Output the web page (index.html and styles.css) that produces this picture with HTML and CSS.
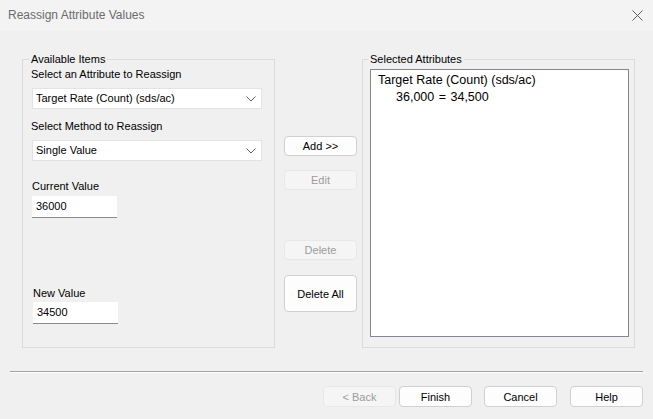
FILE: index.html
```html
<!DOCTYPE html>
<html lang="en">
<head>
    <meta charset="UTF-8">
    <title>Reassign Attribute Values</title>
    <link rel="stylesheet" href="styles.css">
</head>
<body>
    <div class="dialog">
        <div class="titlebar">
            <span class="title">Reassign Attribute Values</span>
            <svg class="close" width="11" height="11" viewBox="0 0 11 11">
                <path d="M0.5 0.5 L10.5 10.5 M10.5 0.5 L0.5 10.5" stroke="#5f5f5f" stroke-width="1" fill="none"/>
            </svg>
        </div>

        <div class="content">
            <fieldset class="group group-left">
                <legend>Available Items</legend>
                <div class="label label-first">Select an Attribute to Reassign</div>
                <div class="combo">
                    <span>Target Rate (Count) (sds/ac)</span>
                    <svg width="10" height="6" viewBox="0 0 10 6">
                        <polyline points="0.5,0.5 5,5 9.5,0.5" stroke="#606060" fill="none"/>
                    </svg>
                </div>
                <div class="label label-method">Select Method to Reassign</div>
                <div class="combo">
                    <span>Single Value</span>
                    <svg width="10" height="6" viewBox="0 0 10 6">
                        <polyline points="0.5,0.5 5,5 9.5,0.5" stroke="#606060" fill="none"/>
                    </svg>
                </div>
                <div class="label label-current">Current Value</div>
                <div class="textbox">36000</div>
                <div class="label label-new">New Value</div>
                <div class="textbox textbox-new">34500</div>
            </fieldset>

            <div class="actions">
                <button class="btn btn-add">Add &gt;&gt;</button>
                <button class="btn btn-edit" disabled>Edit</button>
                <button class="btn btn-delete" disabled>Delete</button>
                <button class="btn btn-delete-all">Delete All</button>
            </div>

            <fieldset class="group group-right">
                <legend>Selected Attributes</legend>
                <div class="listbox">
                    <div class="list-item">Target Rate (Count) (sds/ac)</div>
                    <div class="list-item list-sub">36,000 = 34,500</div>
                </div>
            </fieldset>
        </div>

        <div class="separator"></div>

        <div class="footer">
            <button class="btn btn-back" disabled>&lt; Back</button>
            <button class="btn btn-finish">Finish</button>
            <button class="btn btn-cancel">Cancel</button>
            <button class="btn btn-help">Help</button>
        </div>
    </div>
</body>
</html>
```

FILE: styles.css
```css
* {
    margin: 0;
    padding: 0;
    box-sizing: border-box;
}

body {
    font-family: "Liberation Sans", Arial, sans-serif;
    font-size: 11px;
    line-height: 15px;
    color: #000;
    background: #f0f0f0;
    width: 653px;
    height: 419px;
    overflow: hidden;
}

.dialog {
    width: 653px;
    height: 419px;
}

/* window caption */
.titlebar {
    height: 31px;
    background: #f3f3f3;
    display: flex;
    align-items: center;
    justify-content: space-between;
    padding: 0 10px 0 8px;
}

.title {
    color: #6b6b6b;
    font-size: 12px;
}

.close {
    display: block;
    margin-top: -1px;
}

/* three columns: source group, action buttons, selected group */
.content {
    display: flex;
    align-items: flex-start;
    padding: 21px 0 0 22px;
}

.group {
    border: 1px solid #dcdcdc;
    height: 296px;
    min-width: 0;
}

.group legend {
    padding: 0 2px;
    margin-left: -2px;
    line-height: 15px;
}

.group-left {
    width: 253px;
    padding: 0 12px 0 8px;
}

.group-right {
    width: 273px;
    margin-left: 5px;
    padding: 0 5px 0 7px;
}

.label-method {
    margin-top: 10px;
}

.label-current {
    margin-top: 18px;
    margin-left: 1px;
}

.label-new {
    margin-top: 68px;
    margin-left: 2px;
}

.combo {
    margin-top: 6px;
    margin-left: 1px;
    height: 21px;
    background: #fff;
    border: 1px solid #e3e3e3;
    display: flex;
    align-items: center;
    justify-content: space-between;
    padding: 0 5px 0 3px;
}

.combo svg {
    display: block;
}

.textbox {
    margin-top: 2px;
    margin-left: 1px;
    width: 85px;
    height: 22px;
    background: #fff;
    border-bottom: 1px solid #8a8a8a;
    padding: 3px 0 0 4px;
}

.textbox-new {
    margin-top: 1px;
    margin-left: 2px;
}

.actions {
    width: 73px;
    margin-left: 9px;
    padding-top: 84px;
    display: flex;
    flex-direction: column;
}

.btn {
    font-family: inherit;
    font-size: 11px;
    color: #000;
    background: #fdfdfd;
    border: 1px solid #d0d0d0;
    border-radius: 4px;
    height: 20px;
}

.btn:disabled {
    background: #f5f5f5;
    border-color: #e8e8e8;
    color: #9c9c9c;
}

.btn-edit {
    margin-top: 14px;
}

.btn-delete {
    margin-top: 50px;
}

.btn-delete-all {
    margin-top: 15px;
    height: 37px;
}

.listbox {
    margin-top: 2px;
    height: 268px;
    background: #fff;
    border: 1px solid #828790;
    padding: 2px 0 0 7px;
    font-size: 12.5px;
}

.list-item {
    line-height: 17px;
}

.list-sub {
    padding-left: 18px;
    word-spacing: 1px;
}

.separator {
    margin: 23px 10px 0 10px;
    height: 2px;
    border-top: 1px solid #a0a0a0;
    border-bottom: 1px solid #fff;
}

.footer {
    display: flex;
    justify-content: flex-end;
    padding: 13px 10px 0 0;
}

.footer .btn {
    width: 73px;
    height: 21px;
}

.btn-finish {
    margin-left: 3px;
}

.btn-cancel {
    margin-left: 12px;
}

.btn-help {
    margin-left: 13px;
}
```
